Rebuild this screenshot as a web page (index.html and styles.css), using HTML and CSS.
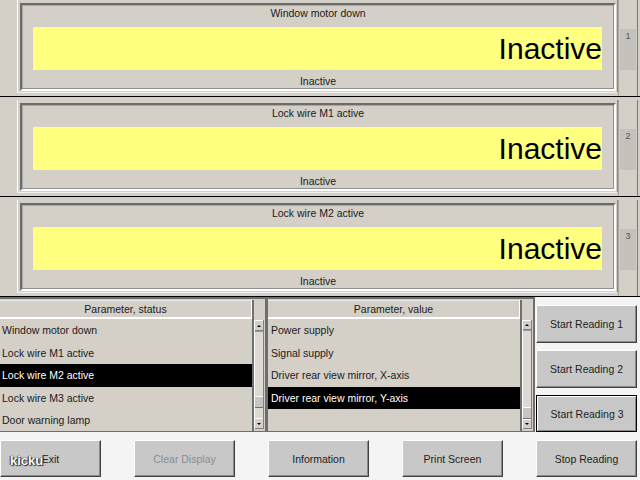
FILE: index.html
```html
<!DOCTYPE html>
<html>
<head>
<meta charset="utf-8">
<link rel="stylesheet" href="styles.css">
</head>
<body>
<div class="screen">
  <div class="sections">
    <div class="section">
      <div class="panel">
        <div class="frame">
          <div class="title">Window motor down</div>
          <div class="display">Inactive</div>
          <div class="status">Inactive</div>
        </div>
      </div>
      <div class="tabcol"><div class="tab">1</div></div>
    </div>
    <div class="section">
      <div class="panel">
        <div class="frame">
          <div class="title">Lock wire M1 active</div>
          <div class="display">Inactive</div>
          <div class="status">Inactive</div>
        </div>
      </div>
      <div class="tabcol"><div class="tab">2</div></div>
    </div>
    <div class="section">
      <div class="panel">
        <div class="frame">
          <div class="title">Lock wire M2 active</div>
          <div class="display">Inactive</div>
          <div class="status">Inactive</div>
        </div>
      </div>
      <div class="tabcol"><div class="tab">3</div></div>
    </div>
  </div>

  <div class="lists">
    <div class="list list-left">
      <div class="list-main">
        <div class="list-head">Parameter, status</div>
        <div class="row">Window motor down</div>
        <div class="row">Lock wire M1 active</div>
        <div class="row selected">Lock wire M2 active</div>
        <div class="row">Lock wire M3 active</div>
        <div class="row">Door warning lamp</div>
      </div>
      <div class="scrollcol">
        <div class="scrollbar">
          <div class="arrow"><span class="tri-up"></span></div>
          <div class="track"><div class="thumb thumb-left"></div></div>
          <div class="arrow"><span class="tri-down"></span></div>
        </div>
      </div>
    </div>
    <div class="list list-right">
      <div class="list-main">
        <div class="list-head">Parameter, value</div>
        <div class="row">Power supply</div>
        <div class="row">Signal supply</div>
        <div class="row">Driver rear view mirror, X-axis</div>
        <div class="row selected">Driver rear view mirror, Y-axis</div>
        <div class="row"></div>
      </div>
      <div class="scrollcol">
        <div class="scrollbar">
          <div class="arrow"><span class="tri-up"></span></div>
          <div class="track"><div class="thumb thumb-right"></div></div>
          <div class="arrow"><span class="tri-down"></span></div>
        </div>
      </div>
    </div>
    <div class="side">
      <div class="btn side-btn">Start Reading 1</div>
      <div class="btn side-btn">Start Reading 2</div>
      <div class="btn side-btn focused">Start Reading 3</div>
    </div>
  </div>

  <div class="bottom">
    <div class="btn bottom-btn">Exit</div>
    <div class="btn bottom-btn disabled">Clear Display</div>
    <div class="btn bottom-btn">Information</div>
    <div class="btn bottom-btn">Print Screen</div>
    <div class="btn bottom-btn">Stop Reading</div>
  </div>

  <div class="watermark">kicku</div>
</div>
</body>
</html>
```

FILE: styles.css
```css
body {
  margin: 0;
  font-family: "Liberation Sans", Arial, sans-serif;
  font-size: 10.5px;
  color: #1a1a1a;
  background: #f4f4f4;
}

.screen {
  position: relative;
  width: 640px;
  height: 480px;
  overflow: hidden;
  background: #f4f4f4;
}

.sections {
  background: #d4d0c8;
}

.section {
  display: flex;
  height: 97px;
  box-sizing: border-box;
  border-bottom: 1px solid #000;
  background: #d4d0c8;
}

.section + .section {
  margin-top: 3px;
}

.panel {
  box-sizing: border-box;
  margin-left: 17px;
  width: 601px;
  height: 93px;
  padding: 3px 1px 0 2px;
  border-left: 1px solid #fff;
  border-right: 1px solid #8a8a8a;
  border-bottom: 1px solid #f2f2f2;
}

.frame {
  box-sizing: border-box;
  width: 596px;
  height: 88px;
  border: 2px solid;
  border-color: #6b6b6b #fff #fff #6b6b6b;
  box-shadow: inset -1px -1px 0 #8f8f8f, inset 1px 1px 0 #a8a8a8;
  display: flex;
  flex-direction: column;
}

.title {
  height: 16px;
  line-height: 16px;
  text-align: center;
}

.display {
  margin: 6px 12px 0 11px;
  height: 43px;
  line-height: 44px;
  background: #ffff80;
  color: #000;
  font-size: 30px;
  text-align: right;
}

.status {
  margin-top: 4px;
  height: 14px;
  line-height: 14px;
  text-align: center;
}

.tabcol {
  flex: none;
  width: 20px;
  box-sizing: border-box;
  border-left: 1px solid #a9a6a0;
  border-right: 1px solid #7a7a7a;
  padding-left: 1px;
  display: flex;
}

.tab {
  margin-top: 29px;
  width: 16px;
  height: 41px;
  background: #c4c1bc;
  color: #555;
  font-size: 9px;
  line-height: 14px;
  text-align: center;
}

/* Lists */
.lists {
  display: flex;
  height: 135px;
}

.list {
  display: flex;
  box-sizing: border-box;
  background: #d4d0c8;
  border-top: 2px solid #6e6e6e;
  border-bottom: 1px solid #6e6e6e;
  padding-top: 1px;
}

.list-left {
  width: 267px;
  border-right: 2px solid #6e6e6e;
}

.list-right {
  width: 268px;
  border-left: 1px solid #6e6e6e;
  border-right: 2px solid #6e6e6e;
}

.list-main {
  flex: 1;
  display: flex;
  flex-direction: column;
  border-right: 2px solid #707070;
}

.list-head {
  box-sizing: border-box;
  height: 19px;
  line-height: 17px;
  text-align: center;
  border-top: 1px solid #e8e8e8;
  border-bottom: 2px solid #fff;
  border-right: 1px solid #fff;
}

.row {
  height: 22.6px;
  line-height: 22.6px;
  padding-left: 2px;
  white-space: nowrap;
}

.list-right .row {
  padding-left: 3px;
}

.row.selected {
  background: #000;
  color: #fff;
}

.scrollcol {
  width: 10px;
  padding: 20px 1px 0 0;
}

.scrollbar {
  height: 109px;
  display: flex;
  flex-direction: column;
  box-sizing: border-box;
  border-left: 1px solid #fff;
  border-right: 1px solid #808080;
}

.arrow {
  height: 9px;
  display: flex;
  align-items: center;
  justify-content: center;
  background: #d4d0c8;
  border-top: 1px solid #fff;
  border-bottom: 1px solid #808080;
}

.tri-up {
  width: 0;
  height: 0;
  border-left: 2px solid transparent;
  border-right: 2px solid transparent;
  border-bottom: 2px solid #000;
}

.tri-down {
  width: 0;
  height: 0;
  border-left: 2px solid transparent;
  border-right: 2px solid transparent;
  border-top: 2px solid #000;
}

.track {
  flex: 1;
  background: #dcd9d3;
  border-top: 1px solid #9a9a9a;
}

.thumb {
  box-sizing: border-box;
  height: 12px;
  background: #c8c5c0;
  border-top: 1px solid #fff;
  border-bottom: 1px solid #707070;
}

.thumb-left {
  margin-top: 64px;
}

.thumb-right {
  margin-top: 76px;
}

/* Buttons */
.btn {
  box-sizing: border-box;
  display: flex;
  align-items: center;
  justify-content: center;
  background: #c8c8c8;
  color: #222;
  border: 1px solid;
  border-color: #fff #404040 #404040 #fff;
  box-shadow: inset -1px -1px 0 #8a8a8a;
  white-space: nowrap;
}

.side {
  flex: 1;
  display: flex;
  flex-direction: column;
  gap: 7px;
  padding: 8px 0 0 1px;
  background: #f4f4f4;
}

.side-btn {
  width: 101px;
  height: 38px;
}

.side-btn.focused {
  height: 37px;
  outline: 1px solid #000;
  outline-offset: -1px;
  border-width: 2px 1px 1px 2px;
}

.bottom {
  height: 48px;
  box-sizing: border-box;
  display: flex;
  justify-content: space-between;
  padding: 8px 3px 0 0;
}

.bottom-btn {
  width: 101px;
  height: 37px;
}

.bottom-btn.disabled {
  color: #8c8c8c;
}

.watermark {
  position: absolute;
  left: 10px;
  top: 453px;
  font-family: "Liberation Sans", Arial, sans-serif;
  font-weight: bold;
  font-size: 13px;
  color: #fff;
  text-shadow: 0 0 1px #000, 1px 1px 1px #333, -1px 0 1px #555;
}
```
